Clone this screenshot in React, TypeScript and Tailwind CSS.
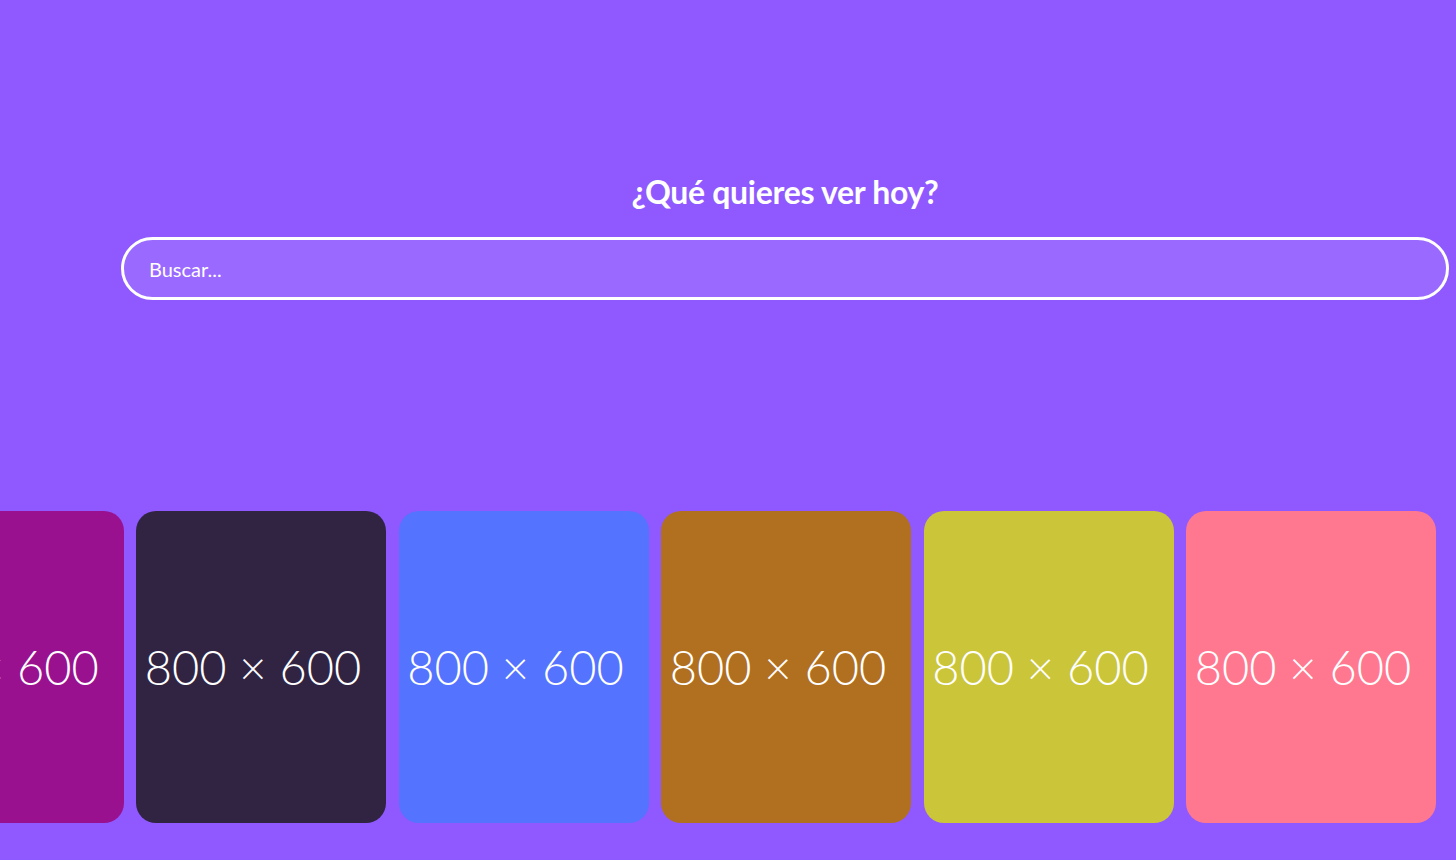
const cards = ["#9a1190", "#312443", "#5473ff", "#b16f20", "#cbc53a", "#ff7890"];

const Card = ({ color }: { color: string }) => (
  <div
    className="w-[250px] h-[312px] shrink-0 rounded-[20px] overflow-hidden flex items-center justify-center"
    style={{ backgroundColor: color }}
  >
    <span className="pr-[16px] text-[47px] font-light text-white whitespace-nowrap leading-none font-['Lato',sans-serif]">
      800 × 600
    </span>
  </div>
);

export default function App() {
  return (
    <div className="w-full h-[860px] bg-[#8f59ff] overflow-hidden font-['Lato',sans-serif]">
      <section className="pl-[121px] pr-[7px] pt-[171px]">
        <h1 className="text-center text-white text-[32px] font-bold leading-[42px] tracking-[-0.3px]">
          ¿Qué quieres ver hoy?
        </h1>
        <input
          type="text"
          placeholder="Buscar..."
          className="mt-[24px] w-full h-[63px] rounded-full border-[3px] border-white bg-[#9a69ff] px-[25px] text-[20px] text-white placeholder:text-white outline-none"
        />
      </section>
      <div className="mt-[211px] flex gap-[12.5px] -ml-[126.5px]">
        {cards.map((c) => (
          <Card key={c} color={c} />
        ))}
      </div>
    </div>
  );
}
